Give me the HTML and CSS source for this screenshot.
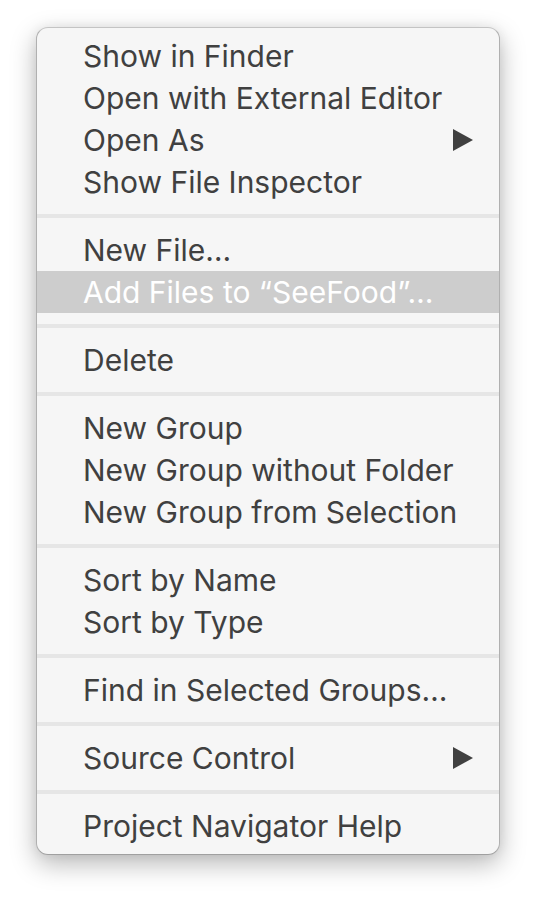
FILE: index.html
```
<!DOCTYPE html>
<html lang="en">
<head>
<meta charset="utf-8">
<meta name="viewport" content="width=device-width, initial-scale=1">
<title>Project Navigator</title>
<link rel="stylesheet" href="styles.css">
</head>
<body>
<nav class="menu" aria-label="Project Navigator">
  <div class="group">
    <button class="item" type="button">Show in Finder</button>
    <button class="item" type="button">Open with External Editor</button>
    <button class="item" type="button">Open As
      <svg class="arrow" viewBox="0 0 20 22" aria-hidden="true"><path d="M0 0L20 11L0 22Z"/></svg>
    </button>
    <button class="item" type="button">Show File Inspector</button>
  </div>
  <div class="group">
    <button class="item" type="button">New File…</button>
    <button class="item item-active" type="button">Add Files to “SeeFood”…</button>
  </div>
  <div class="group">
    <button class="item" type="button">Delete</button>
  </div>
  <div class="group">
    <button class="item" type="button">New Group</button>
    <button class="item" type="button">New Group without Folder</button>
    <button class="item" type="button">New Group from Selection</button>
  </div>
  <div class="group">
    <button class="item" type="button">Sort by Name</button>
    <button class="item" type="button">Sort by Type</button>
  </div>
  <div class="group">
    <button class="item" type="button">Find in Selected Groups…</button>
  </div>
  <div class="group">
    <button class="item" type="button">Source Control
      <svg class="arrow" viewBox="0 0 20 22" aria-hidden="true"><path d="M0 0L20 11L0 22Z"/></svg>
    </button>
  </div>
  <div class="group">
    <button class="item" type="button">Project Navigator Help</button>
  </div>
</nav>
</body>
</html>
```
FILE: styles.css
```
* {
  box-sizing: border-box;
}

body {
  margin: 0;
  padding: 27px 36px 44px;
  background: #fff;
  font-family: Inter, Roboto, sans-serif;
}

.menu {
  padding: 7px 0;
  border: 1px solid #b0b0b0;
  border-color: #c4c4c4 #b0b0b0 #a0a0a0;
  border-radius: 12px;
  background: #f6f6f6;
  box-shadow: 0 9px 26px rgba(0, 0, 0, 0.28), 0 0 12px rgba(0, 0, 0, 0.06);
}

.group + .group {
  margin-top: 11px;
  padding-top: 11px;
  border-top: 4px solid #e6e6e6;
}

.item {
  display: flex;
  align-items: center;
  justify-content: space-between;
  width: 100%;
  height: 42px;
  margin: 0;
  padding: 0 26px 0 46px;
  border: 0;
  background: none;
  color: #404040;
  font: inherit;
  font-size: 30px;
  text-align: left;
  white-space: nowrap;
}

.item-active {
  background: #cdcdcd;
  color: #fff;
}

.arrow {
  flex: none;
  width: 20px;
  height: 22px;
  fill: #404040;
}
```
